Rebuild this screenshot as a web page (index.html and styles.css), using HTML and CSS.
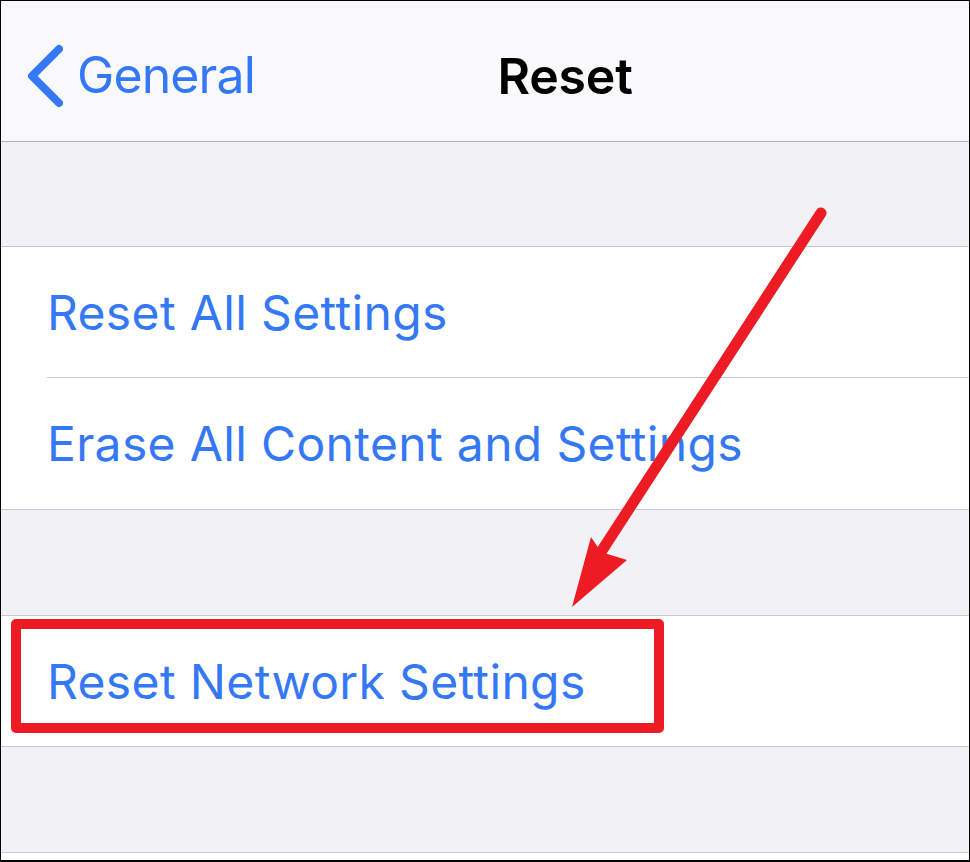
FILE: index.html
```html
<!DOCTYPE html>
<html lang="en">
<head>
    <meta charset="UTF-8">
    <meta name="viewport" content="width=device-width, initial-scale=1.0">
    <title>Reset</title>
    <link rel="stylesheet" href="styles.css">
</head>
<body>
    <div class="screen">
        <header class="navbar">
            <a class="back" href="#">
                <svg class="chevron" width="40" height="66" viewBox="0 0 40 66">
                    <polyline points="36,6 9,33 36,60" fill="none" stroke="#3478f6" stroke-width="8" stroke-linecap="round" stroke-linejoin="round"/>
                </svg>
                <span>General</span>
            </a>
            <h1 class="title">Reset</h1>
        </header>

        <div class="gap"></div>
        <ul class="group">
            <li>Reset All Settings</li>
            <li>Erase All Content and Settings</li>
        </ul>

        <div class="gap gap-lg"></div>
        <ul class="group">
            <li>Reset Network Settings</li>
        </ul>

        <div class="gap gap-lg"></div>
        <div class="tail"></div>

        <!-- annotation -->
        <div class="highlight"></div>
        <svg class="arrow" width="970" height="862" viewBox="0 0 970 862">
            <line x1="821" y1="213" x2="601" y2="552" stroke="#ed1c24" stroke-width="11" stroke-linecap="round"/>
            <polygon points="572,607 591,537 601,552 627,560" fill="#ed1c24"/>
        </svg>
    </div>
</body>
</html>
```

FILE: styles.css
```css
* {
    box-sizing: border-box;
}
body {
    margin: 0;
    font-family: Inter, "Noto Sans", sans-serif;
    background: #fff;
}
.screen {
    position: relative;
    width: 970px;
    height: 862px;
    border: 1px solid #000;
    border-bottom-width: 2px;
    overflow: hidden;
    background: #fff;
}
.navbar {
    height: 141px;
    padding-top: 10px;
    background: #f9f9fb;
    border-bottom: 1px solid #b2b2b6;
    display: flex;
    align-items: center;
    position: relative;
}
.back {
    display: flex;
    align-items: center;
    gap: 14px;
    padding-left: 22px;
    color: #3478f6;
    text-decoration: none;
    font-size: 50px;
    letter-spacing: -0.9px;
}
.back span {
    margin-top: -2px;
}
.title {
    position: absolute;
    left: 0;
    right: 0;
    top: 10px;
    bottom: 0;
    margin: 0;
    display: flex;
    align-items: center;
    justify-content: center;
    font-size: 50px;
    font-weight: 600;
    color: #000;
    letter-spacing: -0.2px;
    padding-left: 160px;
    pointer-events: none;
}
.gap {
    height: 104px;
    background: #f2f1f6;
}
.gap-lg {
    height: 105px;
}
.tail {
    height: 8px;
    border-top: 1px solid #c8c7cc;
}
.group {
    list-style: none;
    margin: 0;
    padding: 0;
    background: #fff;
    border-top: 1px solid #c8c7cc;
    border-bottom: 1px solid #c8c7cc;
}
.group li {
    height: 130px;
    margin-left: 46px;
    display: flex;
    align-items: center;
    color: #3478f6;
    font-size: 48px;
    letter-spacing: 0.35px;
}
.group li + li {
    height: 132px;
    border-top: 1px solid #c8c7cc;
}
.highlight {
    position: absolute;
    left: 10px;
    top: 618px;
    width: 653px;
    height: 114px;
    border: 10px solid #ed1c24;
    border-radius: 5px;
}
.arrow {
    position: absolute;
    left: -1px;
    top: -1px;
}
```
